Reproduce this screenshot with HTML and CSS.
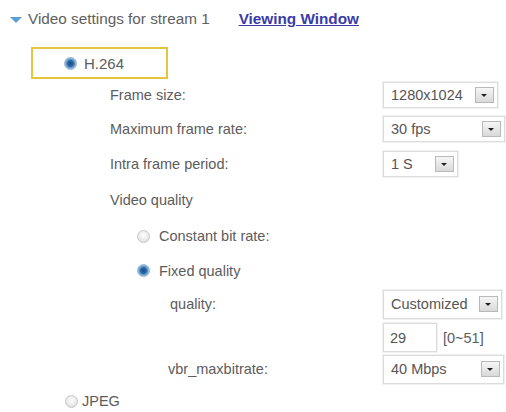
FILE: index.html
```html
<!DOCTYPE html>
<html lang="en">
<head>
<meta charset="utf-8">
<title>Video settings</title>
<link rel="stylesheet" href="styles.css">
</head>
<body>
<div class="panel">
  <div class="head">
    <span class="caret"></span>
    <span class="title">Video settings for stream 1</span>
    <a class="link" href="#">Viewing Window</a>
  </div>

  <div class="codec-box">
    <span class="radio on"></span>
    <span class="codec-label">H.264</span>
  </div>

  <div class="row r-frame">
    <span class="label lv1">Frame size:</span>
    <div class="select w-115"><span>1280x1024</span><span class="drop"></span></div>
  </div>
  <div class="row r-rate">
    <span class="label lv1">Maximum frame rate:</span>
    <div class="select w-122"><span>30 fps</span><span class="drop"></span></div>
  </div>
  <div class="row r-intra">
    <span class="label lv1">Intra frame period:</span>
    <div class="select w-75"><span>1 S</span><span class="drop"></span></div>
  </div>
  <div class="row r-vq">
    <span class="label lv1">Video quality</span>
  </div>
  <div class="row r-cbr">
    <span class="label lv2"><span class="radio"></span>Constant bit rate:</span>
  </div>
  <div class="row r-fq">
    <span class="label lv2"><span class="radio on"></span>Fixed quality</span>
  </div>
  <div class="row r-quality">
    <span class="label lv3">quality:</span>
    <div class="select w-119 tall"><span>Customized</span><span class="drop"></span></div>
  </div>
  <div class="row r-num">
    <span class="label lv3"></span>
    <div class="num-wrap">
      <div class="input">29</div>
      <span class="range">[0~51]</span>
    </div>
  </div>
  <div class="row r-vbr">
    <span class="label lv3b">vbr_maxbitrate:</span>
    <div class="select w-121 tall"><span>40 Mbps</span><span class="drop"></span></div>
  </div>

  <div class="row r-jpeg">
    <span class="label lv0"><span class="radio"></span>JPEG</span>
  </div>
</div>
</body>
</html>
```

FILE: styles.css
```css
html, body {
  margin: 0;
  padding: 0;
  background: #ffffff;
}

body {
  font-family: "Liberation Sans", Arial, sans-serif;
  font-size: 14.5px;
  color: #5c5c5c;
}

.panel {
  display: flex;
  flex-direction: column;
  width: 506px;
}

/* section header */
.head {
  display: flex;
  align-items: center;
  height: 38px;
  padding-left: 10px;
}

.caret {
  width: 0;
  height: 0;
  border-left: 6px solid transparent;
  border-right: 6px solid transparent;
  border-top: 6px solid #5d9fd3;
  margin-right: 6px;
  margin-top: 1px;
}

.title {
  font-size: 15.3px;
  color: #606060;
}

.link {
  margin-left: 29px;
  font-size: 15.3px;
  font-weight: bold;
  color: #3b3ba8;
  text-decoration: underline;
}

/* highlighted codec choice */
.codec-box {
  display: flex;
  align-items: center;
  box-sizing: border-box;
  width: 137px;
  height: 32px;
  margin: 9px 0 0 31px;
  border: 2px solid #e6c53e;
  padding-left: 31px;
  font-size: 15px;
}

.codec-label {
  margin-left: 7px;
}

/* radio buttons */
.radio {
  display: inline-block;
  box-sizing: border-box;
  width: 13px;
  height: 13px;
  border-radius: 50%;
  border: 1px solid #c8c8c8;
  background: radial-gradient(circle at 50% 40%, #ffffff 0%, #e8e8e8 60%, #cfcfcf 100%);
  flex: none;
}

.radio.on {
  border-color: #9ab4cc;
  background: radial-gradient(circle at 50% 50%, #1d4a80 0%, #2d69a8 38%, #7fb0da 62%, #d3e3f1 100%);
}

/* form rows */
.row {
  display: flex;
  align-items: center;
}

.label {
  display: flex;
  align-items: center;
  box-sizing: border-box;
  width: 383px;
  flex: none;
}

.lv0 { padding-left: 65px; }
.lv0 .radio { margin-right: 4px; }
.lv1 { padding-left: 110px; }
.lv2 { padding-left: 137px; }
.lv2 .radio { margin-right: 9px; }
.lv3 { padding-left: 170px; }
.lv3b { padding-left: 168px; }

.r-frame   { height: 34px; margin-top: -1px; }
.r-rate    { height: 34px; }
.r-intra   { height: 36px; }
.r-vq      { height: 36px; }
.r-cbr     { height: 36px; }
.r-fq      { height: 33px; }
.r-quality { height: 34px; }
.r-num     { height: 33px; }
.r-vbr     { height: 30px; }
.r-jpeg    { height: 34px; }

/* drop-down lists */
.select {
  display: flex;
  align-items: center;
  justify-content: space-between;
  box-sizing: border-box;
  height: 26px;
  padding: 0 3px 0 7px;
  border: 1px solid #dcdcdc;
  box-shadow: 0 0 0 1px #f1f1f1;
  background: #ffffff;
  color: #555555;
}

.select.tall {
  height: 29px;
}

.w-75  { width: 75px; }
.w-115 { width: 115px; }
.w-119 { width: 119px; }
.w-121 { width: 121px; }
.w-122 { width: 122px; }

.drop {
  position: relative;
  box-sizing: border-box;
  width: 19px;
  height: 16px;
  border: 1px solid #b9b9b9;
  background: linear-gradient(#f6f6f6, #d9d9d9);
  flex: none;
}

.drop::after {
  content: "";
  position: absolute;
  left: 5px;
  top: 6px;
  border-left: 3.5px solid transparent;
  border-right: 3.5px solid transparent;
  border-top: 3px solid #202020;
}

/* numeric entry */
.num-wrap {
  display: flex;
  align-items: center;
}

.input {
  display: flex;
  align-items: center;
  box-sizing: border-box;
  width: 54px;
  height: 29px;
  padding-left: 6px;
  border: 1px solid #dcdcdc;
  box-shadow: 0 0 0 1px #f1f1f1;
  color: #555555;
}

.range {
  margin-left: 6px;
}
```
